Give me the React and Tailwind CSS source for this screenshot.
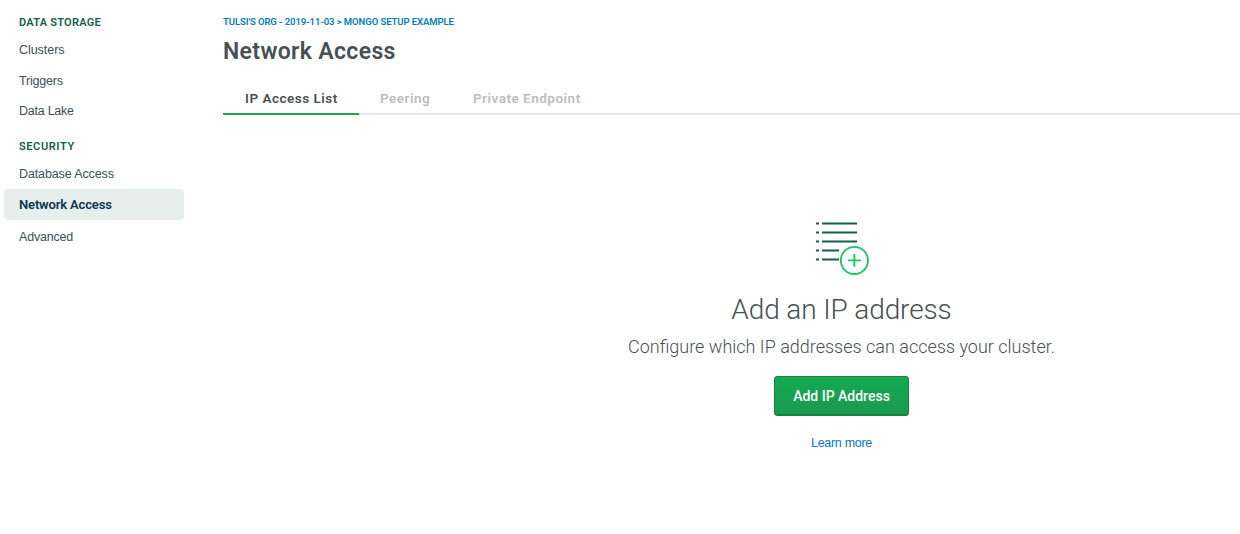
function SideItem({ label, className, active }) {
  return (
    <a
      className={
        "flex items-center rounded pl-[15px] " +
        (active
          ? "bg-[#e7eeec] font-['Roboto',sans-serif] text-[13px] font-semibold tracking-[-0.15px] text-[#0b3556] "
          : "text-[12.5px] text-[#3d4f58] ") +
        className
      }
    >
      {label}
    </a>
  );
}

function SideTitle({ children, className }) {
  return (
    <h2 className={"pl-[15px] font-['Roboto',sans-serif] text-[11px] font-semibold leading-3 text-[#116149] " + className}>
      {children}
    </h2>
  );
}

function Sidebar() {
  return (
    <nav className="flex w-[180px] shrink-0 flex-col pt-[17px]">
      <SideTitle className="tracking-[0.25px]">DATA STORAGE</SideTitle>
      <SideItem label="Clusters" className="mt-[6px] h-[31px] tracking-[-0.05px]" />
      <SideItem label="Triggers" className="h-[31px] tracking-[-0.2px]" />
      <SideItem label="Data Lake" className="h-[29px] tracking-[-0.25px]" />
      <SideTitle className="mt-[15px] tracking-[0.6px]">SECURITY</SideTitle>
      <SideItem label="Database Access" className="mt-[6px] h-[30px] tracking-[-0.12px]" />
      <SideItem label="Network Access" active className="h-[31px]" />
      <SideItem label="Advanced" className="mt-[2px] h-[31px] tracking-[-0.2px]" />
    </nav>
  );
}

function ListPlusIcon() {
  return (
    <svg width="54" height="54" viewBox="0 0 54 54" fill="none">
      <path
        stroke="#116149"
        strokeWidth="2"
        d="M1 2.5h3M7 2.5h35M1 11.5h3M7 11.5h35M1 20.5h3M7 20.5h35M1 29.5h3M7 29.5h17M1 38.5h3M7 38.5h17"
      />
      <g stroke="#13c75b" strokeWidth="1.8">
        <circle cx="39.4" cy="39.4" r="13.6" />
        <path d="M39.4 33v12.8M33 39.4h12.8" />
      </g>
    </svg>
  );
}

export default function App() {
  return (
    <div className="flex h-[534px] w-full overflow-hidden bg-white pl-1 font-['Liberation_Sans',sans-serif]">
      <Sidebar />
      <main className="ml-[39px] flex min-w-0 flex-1 flex-col pt-4">
        <div className="font-['Roboto',sans-serif] text-[9.5px] font-semibold leading-3 tracking-[-0.07px] text-[#007cc0]">
          TULSI'S ORG - 2019-11-03 &gt; MONGO SETUP EXAMPLE
        </div>
        <h1 className="mt-[10px] font-['Roboto',sans-serif] text-[23px] font-semibold leading-[28px] text-[#494f53] tracking-[0.35px]">Network Access</h1>
        <div className="mt-[16px] flex h-[33px] border-b-2 border-[#e7e9e9] font-['Roboto',sans-serif] text-[13.5px] font-semibold leading-[33px] tracking-[0.5px] text-[#babdbe]">
          <div className="h-[33px] w-[136px] border-b-2 border-[#13aa52] pl-[22px] text-[#494f53]">IP Access List</div>
          <div className="ml-[21px] w-[93px]">Peering</div>
          <div>Private Endpoint</div>
        </div>
        <section className="mt-[106px] flex w-full flex-col items-center pl-[220px]">
          <ListPlusIcon />
          <h2 className="mt-[17px] font-['Roboto',sans-serif] text-[28px] font-light leading-9 tracking-[-0.12px] text-[#494f53]">Add an IP address</h2>
          <p className="mt-[7px] font-['Roboto',sans-serif] text-[18px] font-light leading-6 text-[#494f53]">
            Configure which IP addresses can access your cluster.
          </p>
          <button className="mt-[17px] h-10 w-[135px] rounded-[3px] border border-[#158242] bg-linear-to-b from-[#13aa52] to-[#1a9a4d] font-['Roboto',sans-serif] text-[14px] font-medium text-white shadow-[inset_0_-1px_0_#158242]">
            Add IP Address
          </button>
          <a className="mt-[18px] text-[12.5px] leading-[18px] tracking-[-0.3px] text-[#007cc0]">Learn more</a>
        </section>
      </main>
    </div>
  );
}
